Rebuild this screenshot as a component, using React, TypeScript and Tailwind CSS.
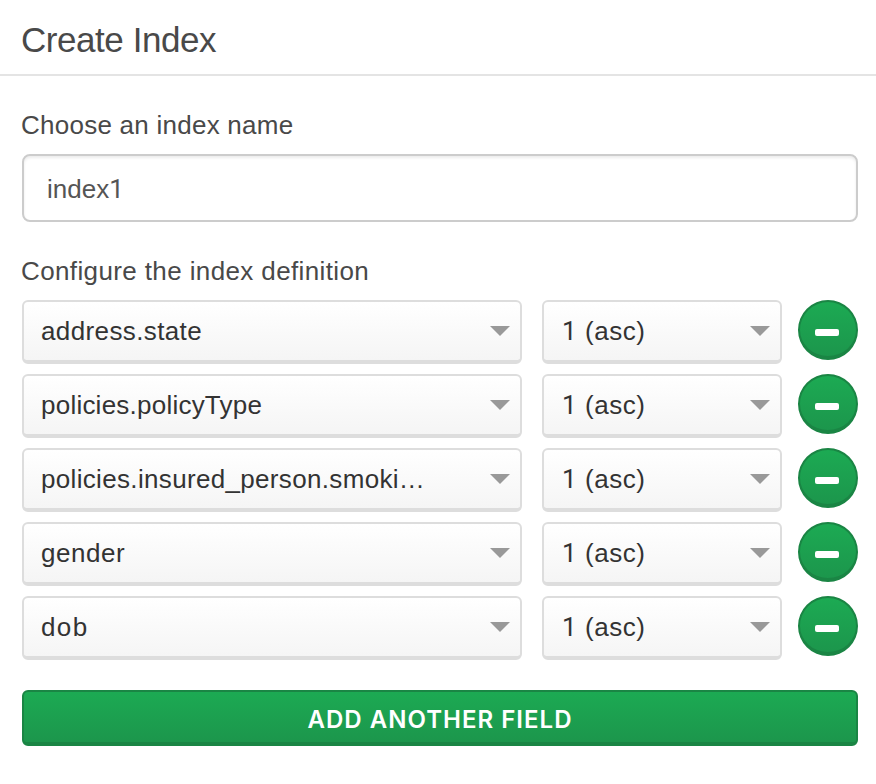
const fields = [
  { name: 'address.state', tracking: 'tracking-[0.38px]' },
  { name: 'policies.policyType', tracking: 'tracking-[0.23px]' },
  { name: 'policies.insured_person.smoki…', tracking: 'tracking-[0.33px]' },
  { name: 'gender', tracking: 'tracking-[0.55px]' },
  { name: 'dob', tracking: 'tracking-[1.4px]' },
];

function Caret() {
  return (
    <svg width="20" height="10" viewBox="0 0 20 10" className="shrink-0" aria-hidden="true">
      <path d="M0 0H20L10 10Z" fill="#999999" />
    </svg>
  );
}

const selectBox =
  'flex h-16 items-center justify-between rounded-[6px] border-2 border-b-4 border-[#dddddd] bg-linear-to-b from-white to-[#f5f5f5] pr-2.5 text-left text-[26px] leading-8 text-[#333333]';

function FieldRow({ name, tracking }: { name: string; tracking: string }) {
  return (
    <div className="flex items-start">
      <button className={`${selectBox} w-[500px] pl-[17px]`}>
        <span className={`whitespace-nowrap ${tracking}`}>{name}</span>
        <Caret />
      </button>
      <button className={`${selectBox} ml-5 w-60 pl-[18px]`}>
        <span className="whitespace-nowrap tracking-[0.55px]">
          <span className="font-['Roboto']">1</span> (asc)
        </span>
        <Caret />
      </button>
      <button
        aria-label="Remove field"
        className="ml-4 flex size-[60px] items-center justify-center rounded-full border-2 border-b-4 border-[#1a8544] bg-linear-to-b from-[#1caa53] to-[#1c964c]"
      >
        <span className="mt-[7px] ml-[-2px] h-[7px] w-6 rounded-[2px] bg-white" />
      </button>
    </div>
  );
}

export default function App() {
  return (
    <div className="h-[784px] w-[876px] overflow-hidden bg-white font-['Liberation_Sans',Arial,sans-serif] text-[#494949]">
      <header className="h-[76px] border-b-2 border-[#e4e4e4] pt-5 pl-[21px]">
        <h1 className="text-[35px] leading-10 tracking-[-0.45px]">Create Index</h1>
      </header>
      <main className="pl-[22px]">
        <label className="mt-[33px] -ml-px block text-[26px] leading-8 tracking-[0.25px]">Choose an index name</label>
        <div className="mt-[13px] flex h-[68px] w-[836px] items-center rounded-[8px] border-2 border-[#cccccc] pt-0.5 pl-[23px] text-[26px] leading-8 text-[#555555] shadow-[inset_0_2px_3px_rgba(0,0,0,0.08)]">
          <span>
            index<span className="font-['Roboto']">1</span>
          </span>
        </div>
        <h2 className="mt-[33px] -ml-px text-[26px] leading-8 tracking-[0.38px]">Configure the index definition</h2>
        <div className="mt-[13px] flex flex-col gap-2.5">
          {fields.map((f) => (
            <FieldRow key={f.name} {...f} />
          ))}
        </div>
        <button className="mt-[30px] flex h-14 w-[836px] items-center justify-center rounded-[6px] border-2 border-b-4 border-[#1a8544] bg-linear-to-b from-[#1caa53] to-[#1c964c] pt-1.5 font-['Inter'] text-[24px] leading-8 font-semibold tracking-[1.02px] text-white">
          ADD ANOTHER FIELD
        </button>
      </main>
    </div>
  );
}
